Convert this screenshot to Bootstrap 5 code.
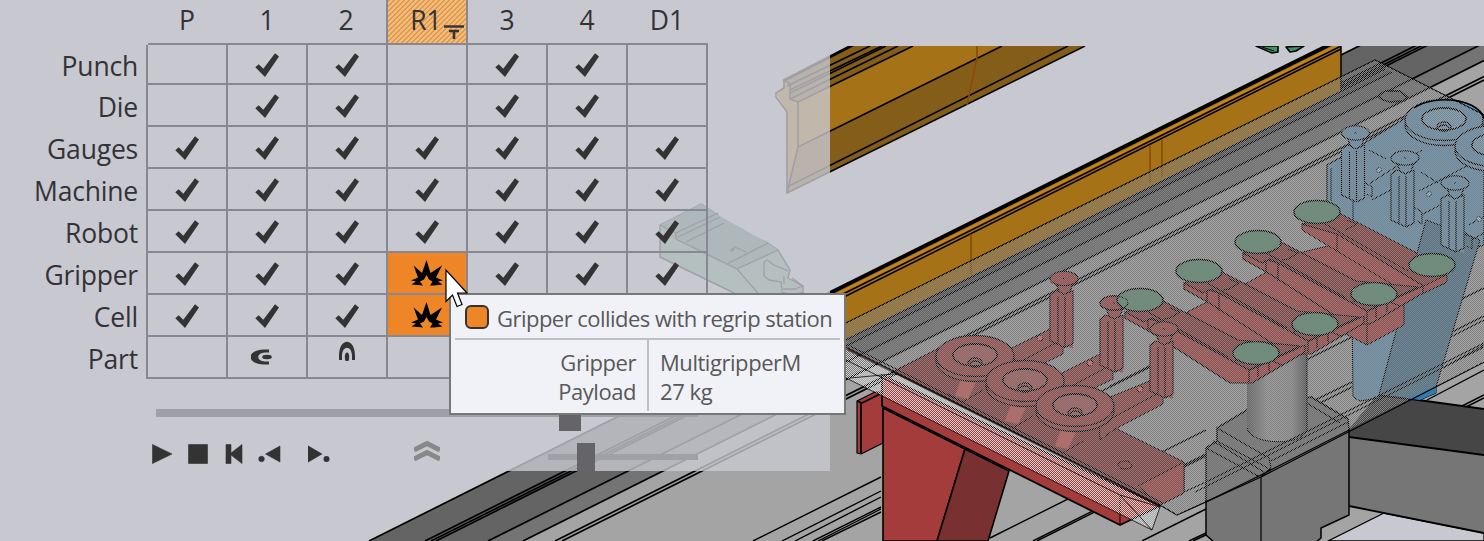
<!DOCTYPE html>
<html lang="en">
<head>
<meta charset="utf-8">
<meta name="viewport" content="width=device-width, initial-scale=1">
<title>Collision check</title>
<link href="https://cdn.jsdelivr.net/npm/bootstrap@5.3.0/dist/css/bootstrap.min.css" rel="stylesheet">
<style>
body{background:#c8c8d1;color:#333336;font-family:"Open Sans","Noto Sans",sans-serif;width:1484px;height:541px}
.scene{left:0;top:0;width:1484px;height:541px;z-index:0}
.panel{width:830px;height:471px;background:rgba(200,200,209,.8);z-index:1}
.checks{width:708px;table-layout:fixed;border-collapse:separate;border-spacing:0;font-size:26.500px;line-height:30px}
.checks th{font-weight:400;padding:0}
.checks td{padding:0;height:42px;border-right:2px solid #888892;border-bottom:2px solid #888892;text-align:center;vertical-align:middle;line-height:0}
.checks thead th{height:45px;text-align:center;border-bottom:2px solid #888892;padding-bottom:4px}
.checks thead th:first-child{border-bottom:0}
.checks thead th span{display:inline-block;position:relative;left:-1px}
.checks tbody th{text-align:right;padding:1px 8px 0 0;border-right:2px solid #888892;letter-spacing:-.2px}
.checks tbody tr:first-child td{height:40px}
.checks .regrip{position:relative;border-right:2px solid #888892;background:repeating-linear-gradient(135deg,#eb9736 0 2px,#e9bc8a 2px 3.54px)}
.checks .before{border-right:2px solid #888892}
.checks .hit{background:#ee8627}
.station{position:absolute;right:2px;bottom:4px}
.track{background:#a0a0a6;position:relative}
.knob{position:absolute;background:#646469}
.tip{left:449px;top:293px;width:397px;height:121.500px;border:2px solid #777;background:#f0f2f8;color:#585858;font-size:22px;line-height:29px;letter-spacing:-.45px;z-index:3;padding:0 4px}
.tip-head{height:45px;border-bottom:2px solid #c0c0c0;padding-left:10px}
.tip-title{letter-spacing:-.53px;padding-top:4px}
.swatch{width:24px;height:24px;border:2px solid #333;border-radius:6px;background:#ee8627}
.tip-key{width:194px;border-right:2px solid #c0c0c0;text-align:right;padding:8px 11px 0 0;height:71px}
.tip-val{padding:8px 0 0 11px}
.pointer{left:444px;top:268px;z-index:4}
</style>
</head>
<body class="position-relative overflow-hidden m-0">

<svg class="scene position-absolute" viewBox="0 0 1484 541">
<defs>
<pattern id="mesh" width="2" height="2" patternUnits="userSpaceOnUse"><path d="M0 0h1v1H0zM1 1h1v1H1z" fill="#828282" shape-rendering="crispEdges"/></pattern>
<pattern id="mesh2" width="2" height="2" patternUnits="userSpaceOnUse"><path d="M0 0h1v1H0zM1 1h1v1H1z" fill="#d2d2d2" shape-rendering="crispEdges"/></pattern>
<linearGradient id="cyl"><stop offset="0" stop-color="#606060"/><stop offset=".35" stop-color="#a0a0a0"/><stop offset=".75" stop-color="#989898"/><stop offset="1" stop-color="#505050"/></linearGradient>
<clipPath id="view"><rect y="46" width="1484" height="495"/></clipPath>
<g id="cup" stroke="#000" stroke-width="1.3">
<ellipse cy="5" rx="39" ry="20.5"/><ellipse rx="39" ry="20.5"/><ellipse cy="-1" rx="22" ry="11" fill-opacity=".6"/><ellipse cy="-1" rx="22" ry="11" fill="#fff" fill-opacity=".12"/><path d="M-7 7a7 5 0 1 1 14 0a7 4 0 1 1-14 0M-5 8a5 3 0 0 1 10 0" fill="none"/>
</g>
<g id="post" stroke="#000" stroke-width="1.1">
<path d="M-14 18L-8 14l17 0 0 56-9-3-14-4z" stroke="none"/><path d="M-14 16L-8 12 2 15 9 12V65L1 69-14 62zM-6 18V66M1 18v51" /><path d="M-8 5l3 8 5 3 6-3 3-8z"/><ellipse rx="14" ry="7.2"/><path d="M-1 0h2" fill="none"/>
</g>
<g id="arm" stroke="#000" stroke-width="1.2">
<path d="M-15 12v6l27 15 78 50h22l53-31v-7l-55 25L20 22z" fill="#b04242"/>
<path d="M-15 12L23 1l75 39 62 6-51 24L20 22 12 18 4 22z" fill="#903a3a"/>
<path d="M8 12l80 45M30 8l10 4-10 6-6 1M20 22v18M8 19v12M109 70v12M93 62l10-5M118 67v10M129 62v9M132 61l10 4" fill="none"/>
</g>
<g id="disc"><ellipse rx="23" ry="11.5" fill="#5f9474" stroke="#000" stroke-width="1.5"/></g>
</defs>
<g clip-path="url(#view)" stroke-linejoin="round">
<!-- machine floor -->
<path d="M369 541L1361 45H1484V541z" fill="#646464"/>
<path d="M488 541L1484 43V541z" fill="#747474"/>
<path d="M523 541L1484 60.500V541z" fill="#a4a4a4"/>
<path d="M369 541L1361 45M425 541L1417 45M431 541L1423 45M436 541L1428 45M488 541L1480 45M523 541L1484 60.500M555 541L1484 76.500M562 541L1484 80" stroke="#000" stroke-width="1.7" fill="none"/>
<path d="M753 541L881 477M782 541L881 491M795 541L881 497M813 541L881 507M818 541L881 509M822 541L881 512" stroke="#000" stroke-width="1.4"/>
<path d="M990 538L1206 430M1033 541L1206 454M1037 541L1206 456M1142 541L1206 509M1189 541L1206 533M1193 541L1206 535M1300 363L1354 336M1305 405L1352 382M1312 407L1352 387M1440 310L1484 288M1436 340L1484 316M1433 346L1484 320M1430 375L1484 345M1427 400L1484 370M1462 406L1484 395M1466 407L1484 398M1110 386L1155 363M1100 392L1150 367" stroke="#000" stroke-width="1.4"/>
<!-- upper beam -->
<path d="M776 93L784 86V80L853 46H1085L787 193V112z" fill="#a67218"/>
<path d="M798 147L1002 46H1085L787 193z" fill="#845e18"/>
<path d="M783 80L853 46H913L830 86 798 101 790 99 789 84z" fill="#845e18"/>
<path d="M783 81L853 45" stroke="#000" stroke-width="3"/>
<path d="M787 86L870 46M790 90L882 46M790 93L886 46M790 99L898 46M798 102L913 46M798 147L1002 46M787 187L1068 46M787 193L1085 46" stroke="#000" stroke-width="1.6"/>
<path d="M776 93L784 88V80L790 84V99L798 102V147L787 193V112L776 97z" stroke="#000" fill="none" stroke-width="1.6"/>
<path d="M977 46V58L967 105" stroke="#8a4a08" stroke-width="1.6" fill="none"/>
<!-- lower beam -->
<path d="M830 292L1330 46H1341V92L830 347z" fill="#a67218"/>
<path d="M828 294L1330 44.500" stroke="#000" stroke-width="4"/>
<path d="M836 294.500L1338 45" stroke="#c4841a" stroke-width="2.200"/>
<path d="M836 297.500L1341 46M838 300L1341 49M1341 46V92" stroke="#000" stroke-width="1.5"/>
<path d="M971 234V275M1150 146V183M1162 140V177" stroke="#8a4a08" stroke-width="1.6"/>
<path d="M846 340L1340 92 1385 69M846 346L1392 72" stroke="#000" stroke-width="1.8" fill="none"/>
<path d="M849 341L1389 71" stroke="#4c4c4c" stroke-width="3"/>
<path d="M1256 46l16 7 6-1V46zM1286 47l4 5 6-1 8-5z" fill="#3f9462" stroke="#000" stroke-width="1.6"/>
<path d="M1262 47l12 4" stroke="#000"/>
<!-- red stand -->
<path d="M857 401L875 392H883V443L861 454 857 453z" fill="#a53c3c" stroke="#000" stroke-width="1.2"/><path d="M861 403V453M857 401l5 2 18-9" stroke="#000" stroke-width="1.8" fill="none"/>
<path d="M883 408L965 449 937 541H883z" fill="#a53c3c" stroke="#000" stroke-width="1.6"/>
<path d="M965 449L1009 471 988 541H937z" fill="#783030" stroke="#000" stroke-width="1.6"/>
<path d="M882 375L1160 506 1120 525 882 406z" fill="#a53c3c" stroke="#000" stroke-width="1.8"/>
<path d="M1120 495V525" stroke="#000"/>
<!-- arm and pedestal -->
<path d="M1384 513L1484 533V541H1328z" fill="#c8c8d1" stroke="#000" stroke-width="1.3"/>
<path d="M1349 429L1377 395 1411 399 1484 409V455L1349 437z" fill="#464646"/>
<path d="M1349 437L1484 455V533L1349 506z" fill="#767676"/>
<path d="M1377 395L1411 399 1484 409M1349 437L1484 455M1349 506L1484 533" stroke="#000" stroke-width="1.8" fill="none"/>
<path d="M1206 535V448L1217 441V428L1247 410 1311 397 1348 419 1349 430V515L1321 528V538L1315 543H1215z" fill="#767676" stroke="#000" stroke-width="1.5"/>
<path d="M1217 428L1269 458 1271 468 1261 477V541M1206 448L1258 476M1213 441L1264 472M1217 441L1268 468M1271 461L1348 422M1311 397L1348 419M1305 402L1340 423M1208 447L1217 441M1206 502L1261 475 1349 430" stroke="#000" stroke-width="1.2" fill="none"/>
<path d="M1247 340V428C1250 446 1304 446 1307 430V340z" fill="url(#cyl)"/>
<path d="M1247 428C1250 446 1304 446 1307 430V355" fill="none" stroke="#000"/>
<!-- blue gripper -->
<g fill="#6b9cbd">
<path d="M1327 165L1345 155 1407 117 1484 125V245L1426 262 1350 222 1327 203z" stroke="#000" stroke-width="1.2"/>
<path d="M1352 300H1408L1379 398 1360 401 1353 397z" stroke="#000"/>
<path d="M1426 220L1480 240 1436 387V393L1420 400 1379 395z" fill="#4c7894" stroke="#000"/>
<path d="M1405 398L1436 386V393L1420 400z" fill="#2f7cb0"/>
<path d="M1331 168V201M1353 181V222M1369 184L1422 150M1372 200L1396 187M1369 150L1386 159M1419 191L1484 157M1421 215L1446 202M1421 172L1438 183M1469 225L1484 216M1471 240L1484 233" stroke="#000" fill="none"/>
<path d="M1364 182l8 5v10l-5-3M1414 207l8 5v12l-5-3M1464 232l8 5v12l-5-3" stroke="#000" fill="none"/>
<use href="#cup" x="1444" y="120"/><use href="#cup" x="1494" y="146"/>
<use href="#post" x="1355.500" y="133"/><use href="#post" x="1405" y="158"/><use href="#post" x="1455" y="183"/>
<g fill="#9bd0ee" stroke="#335"><circle cx="1379" cy="170" r="2.500"/><circle cx="1429" cy="194" r="2.500"/><circle cx="1479" cy="219" r="2.500"/></g>
</g>
<!-- centre gripper arms -->
<path d="M1187 312L1207 302 1247 283 1303 252 1328 246 1446 276V283L1404 300V325L1367 345 1346 334 1300 355 1230 370z" fill="#b04242" stroke="#000"/>
<path d="M1367 300V345M1380 302a4 6 0 0 0 0 10" stroke="#000" fill="none"/>
<path d="M1302 224V230L1322 242 1405 292 1424 293 1447 282V275L1420 284 1337 234z" fill="#b04242" stroke="#000"/>
<path d="M1302 224L1341 214 1415 252 1446 275 1424 286 1337 234z" fill="#903a3a" stroke="#000"/>
<path d="M1325 224L1408 271M1347 220l10 4-12 6M1337 234v18" fill="none" stroke="#000"/>
<use href="#arm" x="1258" y="241"/><use href="#arm" x="1199" y="271"/><use href="#arm" x="1140" y="300"/>
<use href="#disc" x="1317" y="212"/><use href="#disc" x="1258" y="242"/><use href="#disc" x="1199" y="271"/>
<use href="#disc" x="1432" y="265"/><use href="#disc" x="1374" y="294"/><use href="#disc" x="1315" y="324"/><use href="#disc" x="1256" y="353"/>
<!-- red gripper -->
<path d="M893 372L960 337 1115 428 1184 462V493L1160 505z" fill="#8e3a3a" stroke="#000"/>
<path d="M1138 486L1184 462V493L1160 505z" fill="#b04242" stroke="#000"/>
<ellipse cx="1125" cy="465" rx="7" ry="4" fill="none" stroke="#000"/>
<g fill="#9c4040" stroke="#000">
<path id="foot" d="M1012 348L1052 328 1063 335V354L1030 370 1012 358zM1016 364L1063 339" />
<use href="#foot" x="50" y="25"/>
<path d="M1098 402L1152 380 1163 387V404L1115 429 1100 440z"/><path d="M1105 422L1162 391" />
</g>
<g fill="#f46a66" stroke="#000" stroke-width=".8"><circle cx="1040" cy="338" r="3"/><circle cx="1090" cy="363" r="3"/><circle cx="1140" cy="389" r="3"/></g>
<g stroke="#000" stroke-width="1" fill="none"><path d="M948 394l15 8 20-12M998 420l15 8 20-12M1048 445l15 8 20-12"/></g>
<g fill="#d65a56"><path d="M961 379L976 382 968 399 955 396zM1011 404L1026 407 1018 424 1005 421zM1061 429L1076 432 1068 449 1055 446z"/></g>
<g fill="#a84444"><use href="#post" x="1064" y="278.500"/><use href="#post" x="1114" y="303"/><use href="#post" x="1164" y="329"/>
<use href="#cup" x="975" y="356"/><use href="#cup" x="1025" y="381"/><use href="#cup" x="1075" y="406"/></g>
<use href="#disc" x="1140" y="300"/><ellipse cx="1114" cy="303" rx="14" ry="7.200" fill="none" stroke="#000"/>
<!-- transparent table plate -->
<path d="M846 323L1375 60 1484 115M846 347L1160 505M850 346L1163 503M1160 505L1177 515 1261 477 1484 362M1184 492L1206 482 1484 343M1195 492L1484 347" stroke="#000" stroke-width="1.3" fill="none"/>
<path d="M1378 96L1385 91H1400L1407 97 1404 101 1390 102 1383 100z" fill="#646464" stroke="#000" stroke-width="1.8"/>
<path d="M846 323L1375 60 1484 115V362L1177 515 1160 505 846 347z" fill="url(#mesh)"/>
<path d="M1414 108A39 20.500 0 0 1 1484 119" fill="none" stroke="#000" stroke-width="1.400"/>
<path d="M846 350L1160 507 1152 530 846 378z" fill="url(#mesh2)"/>
<path d="M846 378L1152 530 1160 507M846 360L1120 495 1152 530M1120 495L1160 507M850 378L893 374" stroke="#000" stroke-opacity=".75" fill="none"/>
<path d="M848 349L1160 506" stroke="#301818" stroke-opacity=".6" stroke-width="2"/>
<!-- robot flange behind the panel -->
<path d="M660 225L701 204 718 215V220L768 243 778 250 790 270 788 278 803 286V293L745 300 732 292 660 257z" fill="#64a078" stroke="#000" stroke-width="1.4"/>
<path d="M660 225L701 204 718 215 768 243 778 250 737 270 676 240z" fill="#46785f"/>
<path d="M660 225L676 233 718 213M676 233V239L737 269 778 250M737 269L764 300M678 237L720 217M686 242L724 223M727 264L768 243M732 252l3-5 11 5M733 248l-3 3M764 262l3-2 7 5 14 6M764 262v14l5 4 12 2 1 10 10 3 11-2M784 276v8M792 278l11 8-8 3h-12" stroke="#000" stroke-width="1.3" fill="none"/>
</g>
</svg>

<main class="panel position-relative">
<table class="checks">
<colgroup><col style="width:148px"><col span="7" style="width:80px"></colgroup>
<thead><tr><th></th><th><span>P</span></th><th><span>1</span></th><th class="before"><span>2</span></th>
<th class="regrip"><span>R1</span><svg class="station" width="20" height="14" viewBox="0 0 20 14"><path d="M0 1.500h20" stroke="#333" stroke-width="2.400"/><path d="M5 6h10M10 6V14" stroke="#333" stroke-width="2.600" fill="none"/></svg></th>
<th><span>3</span></th><th><span>4</span></th><th><span>D1</span></th></tr></thead>
<tbody id="rows"></tbody>
</table>

<div class="track" style="width:542px;height:8px;margin:30px 0 0 156px"><div class="knob" style="left:403px;top:-6px;width:22px;height:28px"></div></div>

<div class="d-flex align-items-start" style="margin:23px 0 0 152px">
<svg width="130" height="28" viewBox="0 0 130 28" fill="#333" stroke="#333" stroke-width=".6" stroke-linejoin="round"><path d="M.5 4.500L20 14 .5 23.500zM36.500 4.500h19v19h-19zM74 4.500h5v8.500L90 4.500v19L79 15v8.500h-5zM128 6v16L113.500 14z"/><circle cx="109.500" cy="19" r="2.800"/></svg>
<svg class="ms-4" width="24" height="28" viewBox="0 0 24 28" fill="#333"><path d="M2 5.500v17L16.500 14z"/><circle cx="20.500" cy="19" r="3"/></svg>
<svg width="26" height="28" viewBox="0 0 26 28" style="margin-left:84px" fill="none" stroke="#888" stroke-width="4.800"><path d="M0 10L13 3.500 26 10M0 19L13 12.500 26 19"/></svg>
</div>
<div class="track" style="width:150px;height:6px;margin:-14px 0 0 548px"><div class="knob" style="left:29px;top:-11px;width:18px;height:28px"></div></div>
</main>

<section class="tip position-absolute">
<div class="tip-head d-flex align-items-center"><span class="swatch flex-shrink-0"></span><span class="tip-title ms-2 text-nowrap">Gripper collides with regrip station</span></div>
<div class="d-flex"><div class="tip-key">Gripper<br>Payload</div><div class="tip-val">MultigripperM<br>27 kg</div></div>
</section>

<svg class="pointer position-absolute" width="26" height="42" viewBox="0 0 26 42"><path d="M2 2V33.500L8.500 27 13 38.500 18 36.500 13.500 25H23z" fill="#fff" stroke="#000" stroke-width="1.2"/></svg>

<script>
const icons = {
  v: '<svg width="24" height="25" viewBox="0 0 24 25"><path d="M.3 15.200L3.700 12.200 8.300 16.800 20 1.200 24 4.600 10 25z" fill="#333"/></svg>',
  x: '<svg width="32" height="26" viewBox="0 0 32 26"><path d="M0 20.500L7 17.500 2.600 5.600 11 13 15.500 0 19.500 13 31 5.600 25 17.500 32 20.500 27 21.500 31.500 24.500 23 25.500 19 25.500 21.500 21.500 18 19.500 15.500 15 13 19.500 9 21.500 12 25.500 7 25 .5 24.500 5 21.500z"/></svg>',
  c: '<svg width="22" height="18" viewBox="0 0 22 18" style="position:relative;left:-5px"><path d="M18 1.500H13C-5 2-5 16 13 16.500h5v-3h-4C5 13 5 5 14 4.500h4z" fill="#333"/><ellipse cx="16" cy="9" rx="4.800" ry="2.200" fill="#333"/></svg>',
  a: '<svg width="18" height="20" viewBox="0 0 18 20" style="position:relative;top:-6px"><path d="M1 19v-4C1-4 17-4 17 15v4h-3v-4C14 4 4 4 4 15v4z" fill="#333"/><ellipse cx="9" cy="16" rx="2.200" ry="4.500" fill="#333"/></svg>'
};
const rows = [['Punch','-vv-vv-'],['Die','-vv-vv-'],['Gauges','vvvvvvv'],['Machine','vvvvvvv'],['Robot','vvvvvvv'],['Gripper','vvvxvvv'],['Cell','vvvxvvv'],['Part','-ca----']];
document.getElementById('rows').innerHTML = rows.map(([name, cells]) =>
  `<tr><th>${name}</th>${[...cells].map(c => `<td${c === 'x' ? ' class="hit"' : ''}>${icons[c] || ''}</td>`).join('')}</tr>`).join('');
</script>
<script src="https://cdn.jsdelivr.net/npm/bootstrap@5.3.0/dist/js/bootstrap.bundle.min.js"></script>
</body>
</html>
